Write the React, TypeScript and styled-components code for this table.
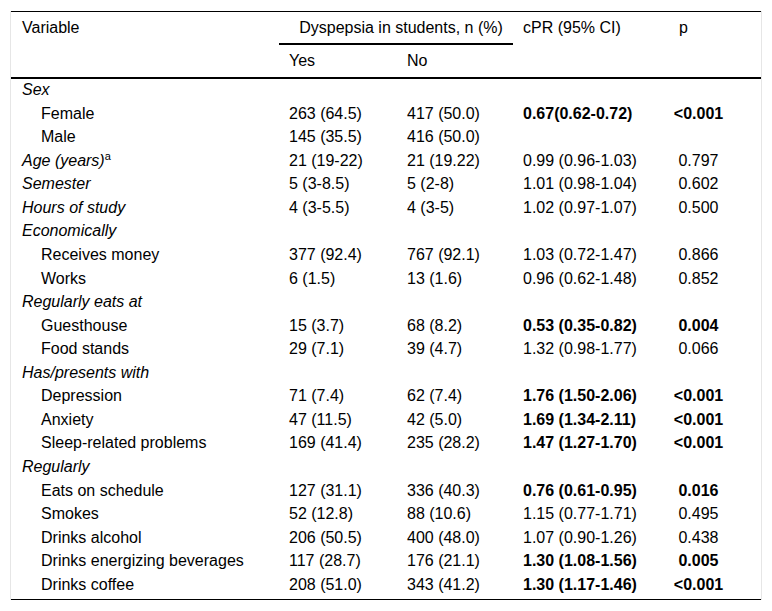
import React from "react";
import styled, { createGlobalStyle } from "styled-components";

const Global = createGlobalStyle`
  html, body { margin: 0; padding: 0; background: #fff; }
  body { font-family: "Liberation Sans", Arial, sans-serif; color: #000; }
`;

const Frame = styled.div`
  margin: 11px 0 0 10px;
  width: 750px;
  border-left: 1px solid #e6e6e6;
  border-right: 1px solid #e6e6e6;
`;

const Table = styled.table`
  width: 750px;
  table-layout: fixed;
  border-collapse: separate;
  border-spacing: 0;
  border-top: 1px solid #000;
  border-bottom: 1px solid #000;
  font-size: 16px;
`;

const Col = styled.col<{ $w: number }>`
  width: ${(p) => p.$w}px;
`;

const Th = styled.th<{ $first?: boolean; $center?: boolean; $rule?: boolean }>`
  font-weight: normal;
  text-align: ${(p) => (p.$center ? "center" : "left")};
  vertical-align: top;
  line-height: 18px;
  padding: 7px 0 6px ${(p) => (p.$first ? 11 : 10)}px;
  white-space: nowrap;
  border-bottom: ${(p) => (p.$rule ? "2px solid #000" : "none")};
`;

const SubTh = styled(Th)`
  padding-bottom: 7px;
`;

const Tr = styled.tr`
  &:last-child td {
    padding-bottom: 4px;
  }
`;

const Td = styled.td<{ $indent?: boolean; $italic?: boolean; $bold?: boolean; $center?: boolean; $first?: boolean }>`
  line-height: 21.57px;
  padding: 0 ${(p) => (p.$center ? 33 : 0)}px 2px
    ${(p) => (p.$indent ? 30 : p.$first ? 11 : p.$center ? 0 : 10)}px;
  font-style: ${(p) => (p.$italic ? "italic" : "normal")};
  font-weight: ${(p) => (p.$bold ? "bold" : "normal")};
  text-align: ${(p) => (p.$center ? "center" : "left")};
  white-space: nowrap;
  vertical-align: top;
`;

const Sup = styled.sup`
  font-style: normal;
  font-size: 11px;
  line-height: 0;
  vertical-align: 6px;
`;

type Data = [string, string, string, string, boolean?];
type Row = { kind: "group" | "item"; label: string; sup?: string; data?: Data };

const rows: Row[] = [
  { kind: "group", label: "Sex" },
  { kind: "item", label: "Female", data: ["263 (64.5)", "417 (50.0)", "0.67(0.62-0.72)", "<0.001", true] },
  { kind: "item", label: "Male", data: ["145 (35.5)", "416 (50.0)", "", ""] },
  { kind: "group", label: "Age (years)", sup: "a", data: ["21 (19-22)", "21 (19.22)", "0.99 (0.96-1.03)", "0.797"] },
  { kind: "group", label: "Semester", data: ["5 (3-8.5)", "5 (2-8)", "1.01 (0.98-1.04)", "0.602"] },
  { kind: "group", label: "Hours of study", data: ["4 (3-5.5)", "4 (3-5)", "1.02 (0.97-1.07)", "0.500"] },
  { kind: "group", label: "Economically" },
  { kind: "item", label: "Receives money", data: ["377 (92.4)", "767 (92.1)", "1.03 (0.72-1.47)", "0.866"] },
  { kind: "item", label: "Works", data: ["6 (1.5)", "13 (1.6)", "0.96 (0.62-1.48)", "0.852"] },
  { kind: "group", label: "Regularly eats at" },
  { kind: "item", label: "Guesthouse", data: ["15 (3.7)", "68 (8.2)", "0.53 (0.35-0.82)", "0.004", true] },
  { kind: "item", label: "Food stands", data: ["29 (7.1)", "39 (4.7)", "1.32 (0.98-1.77)", "0.066"] },
  { kind: "group", label: "Has/presents with" },
  { kind: "item", label: "Depression", data: ["71 (7.4)", "62 (7.4)", "1.76 (1.50-2.06)", "<0.001", true] },
  { kind: "item", label: "Anxiety", data: ["47 (11.5)", "42 (5.0)", "1.69 (1.34-2.11)", "<0.001", true] },
  { kind: "item", label: "Sleep-related problems", data: ["169 (41.4)", "235 (28.2)", "1.47 (1.27-1.70)", "<0.001", true] },
  { kind: "group", label: "Regularly" },
  { kind: "item", label: "Eats on schedule", data: ["127 (31.1)", "336 (40.3)", "0.76 (0.61-0.95)", "0.016", true] },
  { kind: "item", label: "Smokes", data: ["52 (12.8)", "88 (10.6)", "1.15 (0.77-1.71)", "0.495"] },
  { kind: "item", label: "Drinks alcohol", data: ["206 (50.5)", "400 (48.0)", "1.07 (0.90-1.26)", "0.438"] },
  { kind: "item", label: "Drinks energizing beverages", data: ["117 (28.7)", "176 (21.1)", "1.30 (1.08-1.56)", "0.005", true] },
  { kind: "item", label: "Drinks coffee", data: ["208 (51.0)", "343 (41.2)", "1.30 (1.17-1.46)", "<0.001", true] },
];

export default function App() {
  return (
    <>
      <Global />
      <Frame>
        <Table>
          <colgroup>
            <Col $w={268} />
            <Col $w={118} />
            <Col $w={116} />
            <Col $w={156} />
            <Col $w={92} />
          </colgroup>
          <thead>
            <tr>
              <Th $first $rule rowSpan={2}>Variable</Th>
              <Th $center $rule colSpan={2}>Dyspepsia in students, n (%)</Th>
              <Th $rule rowSpan={2}>cPR (95% CI)</Th>
              <Th $rule rowSpan={2}>p</Th>
            </tr>
            <tr>
              <SubTh $rule>Yes</SubTh>
              <SubTh $rule>No</SubTh>
            </tr>
          </thead>
          <tbody>
            {rows.map((r, i) => {
              const d = r.data;
              const bold = !!(d && d[4]);
              return (
                <Tr key={i}>
                  <Td $first $italic={r.kind === "group"} $indent={r.kind === "item"}>
                    {r.label}
                    {r.sup ? <Sup>{r.sup}</Sup> : null}
                  </Td>
                  <Td>{d ? d[0] : ""}</Td>
                  <Td>{d ? d[1] : ""}</Td>
                  <Td $bold={bold}>{d ? d[2] : ""}</Td>
                  <Td $center $bold={bold}>{d ? d[3] : ""}</Td>
                </Tr>
              );
            })}
          </tbody>
        </Table>
      </Frame>
    </>
  );
}
